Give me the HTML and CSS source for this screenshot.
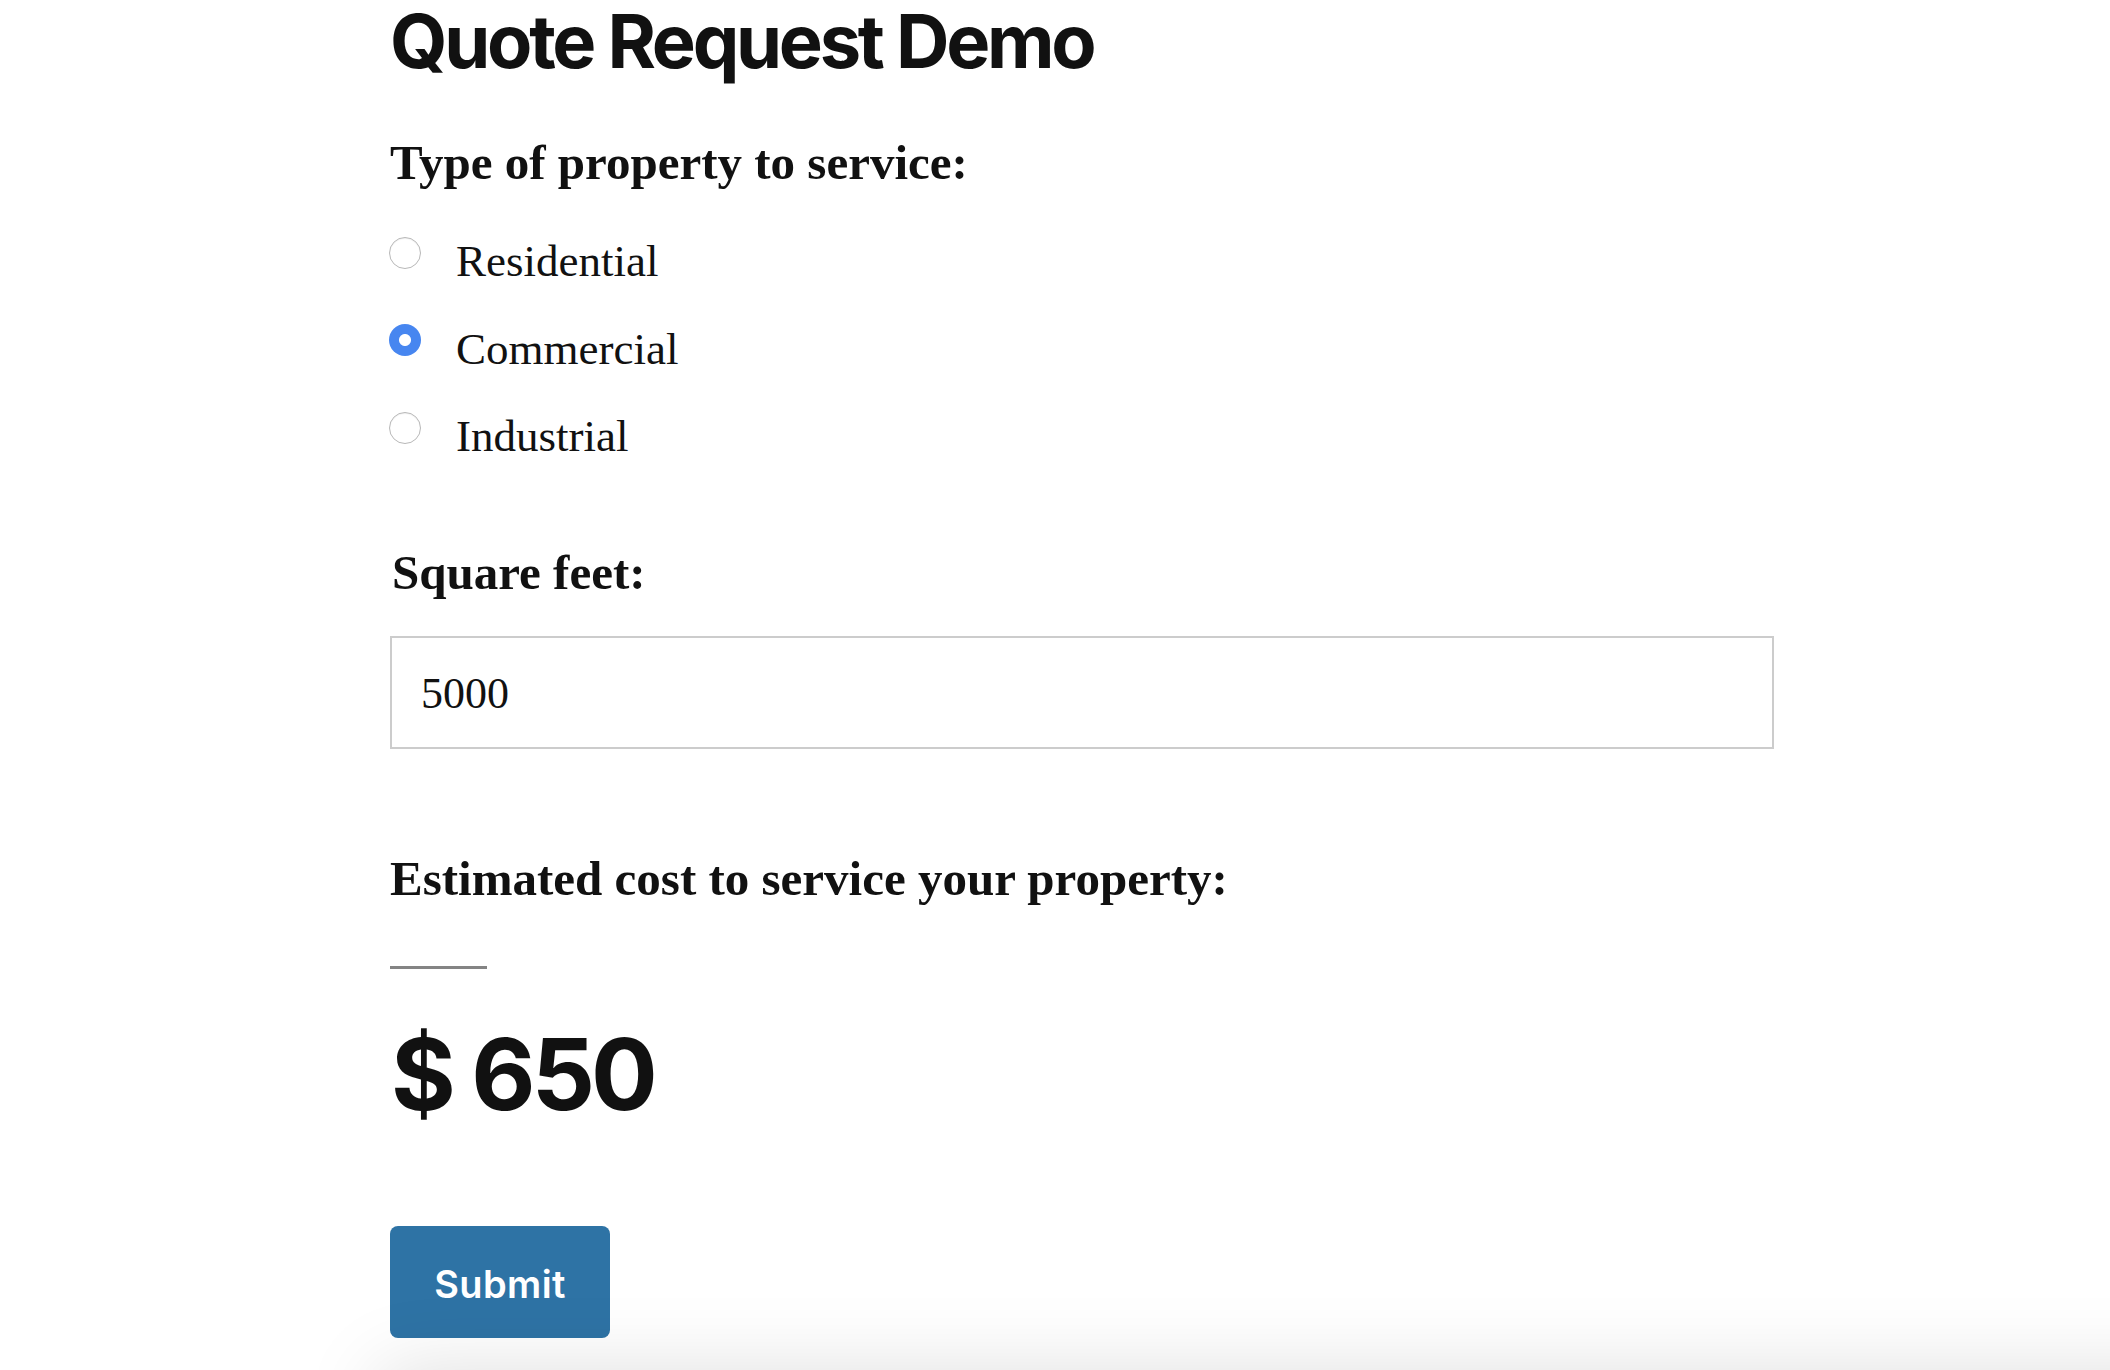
FILE: index.html
```html
<!DOCTYPE html>
<html lang="en">
<head>
<meta charset="utf-8">
<title>Quote Request Demo</title>
<link rel="stylesheet" href="styles.css">
</head>
<body>
<main class="page">
  <h1 class="title">Quote Request Demo</h1>
  <form class="quote-form">
    <div class="group">
      <div class="field-label">Type of property to service:</div>
      <div class="options">
        <label class="option"><input type="radio" name="ptype" class="radio"><span class="option-text">Residential</span></label>
        <label class="option"><input type="radio" name="ptype" class="radio" checked><span class="option-text">Commercial</span></label>
        <label class="option"><input type="radio" name="ptype" class="radio"><span class="option-text">Industrial</span></label>
      </div>
    </div>
    <div class="group group-sqft">
      <label class="field-label" for="sqft">Square feet:</label>
      <input id="sqft" class="text-input" type="text" value="5000">
    </div>
    <div class="group group-estimate">
      <div class="field-label">Estimated cost to service your property:</div>
      <hr class="rule">
      <div class="price">$ 650</div>
    </div>
    <button type="button" class="submit">Submit</button>
  </form>
</main>
<div class="bottom-shade"></div>
</body>
</html>
```
FILE: styles.css
```css
html, body {
  margin: 0;
  padding: 0;
  background: #ffffff;
}

body {
  color: #111111;
  font-family: "Liberation Serif", "Times New Roman", serif;
  overflow: hidden;
  height: 1370px;
}

.page {
  width: 1384px;
  margin-left: 390px;
}

.title {
  margin: 0;
  padding-top: 1px;
  font-family: Inter, "Liberation Sans", sans-serif;
  font-weight: 700;
  font-size: 74px;
  line-height: 80px;
  letter-spacing: -0.044em;
  color: #111111;
}

.quote-form {
  display: flex;
  flex-direction: column;
  align-items: flex-start;
}

.group {
  display: flex;
  flex-direction: column;
  align-items: stretch;
  width: 100%;
}

.field-label {
  display: block;
  font-weight: 700;
  font-size: 49px;
  line-height: 60px;
  color: #111111;
}

.quote-form > .group:first-child {
  margin-top: 52px;
}

.options {
  display: flex;
  flex-direction: column;
  margin-top: 25px;
}

.option {
  display: flex;
  align-items: center;
  height: 87.5px;
  font-size: 45px;
  line-height: 87.5px;
  cursor: pointer;
}

.radio {
  appearance: none;
  -webkit-appearance: none;
  box-sizing: border-box;
  width: 32px;
  height: 32px;
  margin: 0 35px 18px -1px;
  border-radius: 50%;
  border: 1.5px solid #b8b8b8;
  background: #ffffff;
  box-shadow: inset 0 1px 1px rgba(0, 0, 0, 0.06);
  flex: none;
}

.radio:checked {
  border: none;
  background: radial-gradient(circle, #ffffff 0 5.5px, #4786f0 6.5px);
  box-shadow: none;
}

.option-text {
  color: #111111;
}

.group-sqft {
  margin-top: 62px;
}

.group-sqft .field-label {
  margin-left: 2px;
}

.text-input {
  box-sizing: border-box;
  margin-top: 33px;
  width: 1384px;
  height: 113px;
  border: 2px solid #cccccc;
  border-radius: 0;
  padding: 2px 29px 0;
  font-family: "Liberation Serif", "Times New Roman", serif;
  font-size: 44px;
  color: #111111;
  background: #ffffff;
  outline: none;
}

.group-estimate {
  margin-top: 100px;
}

.rule {
  width: 97px;
  height: 3px;
  margin: 57px 0 0;
  border: none;
  background: #848484;
}

.price {
  margin-top: 50px;
  font-family: Inter, "Liberation Sans", sans-serif;
  font-weight: 700;
  font-size: 99px;
  line-height: 110px;
  letter-spacing: -0.04em;
  color: #111111;
  padding-left: 1px;
}

.submit {
  margin-top: 97px;
  width: 220px;
  height: 112px;
  border: none;
  border-radius: 8px;
  background: #2e73a5;
  color: #ffffff;
  font-family: Inter, "Liberation Sans", sans-serif;
  font-weight: 600;
  font-size: 38px;
  letter-spacing: 0.01em;
  cursor: pointer;
  padding: 5px 0 0;
}

.bottom-shade {
  position: fixed;
  left: 380px;
  right: -200px;
  bottom: -100px;
  height: 100px;
  box-shadow: 0 0 80px rgba(0, 0, 0, 0.13);
  pointer-events: none;
}
```
